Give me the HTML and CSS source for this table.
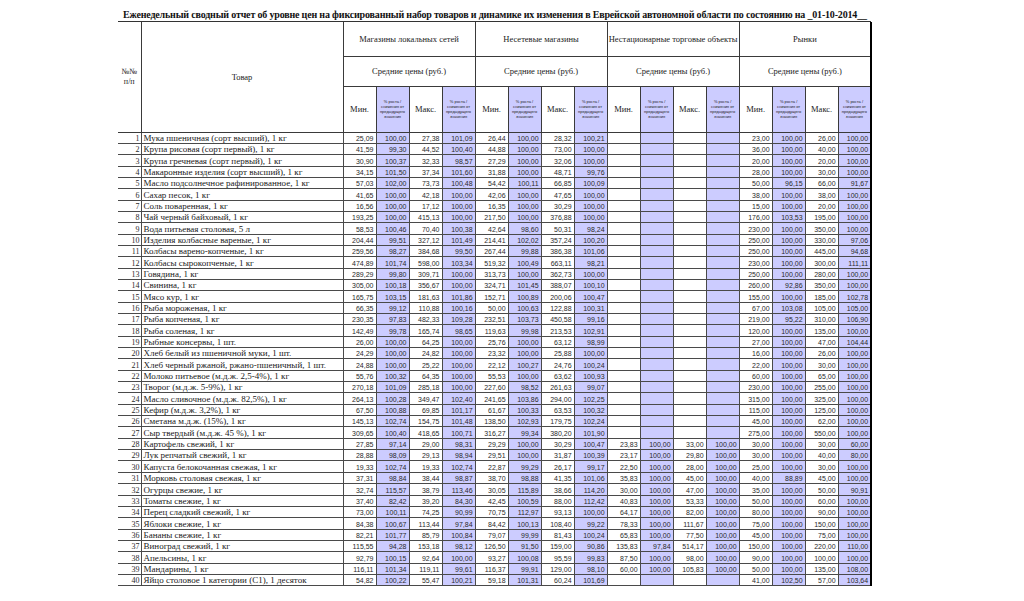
FILE: index.html
```html
<!DOCTYPE html>
<html lang="ru">
<head>
<meta charset="utf-8">
<title>Еженедельный сводный отчет</title>
<link rel="stylesheet" href="styles.css">
</head>
<body>
<div class="page">
<div class="title">Еженедельный сводный отчет об уровне цен на фиксированный набор товаров и динамике их изменения в Еврейской автономной области по состоянию на _01-10-2014__</div>
<table class="grid">
<colgroup>
<col class="c-i"><col class="c-t">
<col class="v"><col class="p"><col class="v"><col class="p">
<col class="v"><col class="p"><col class="v"><col class="p">
<col class="v"><col class="p"><col class="v"><col class="p">
<col class="v"><col class="p"><col class="v"><col class="p">
</colgroup>
<thead>
<tr class="h1">
<th class="hi" rowspan="3">№№<br>п/п</th>
<th class="ht" rowspan="3">Товар</th>
<th class="hg" colspan="4">Магазины локальных сетей</th>
<th class="hg" colspan="4">Несетевые магазины</th>
<th class="hg" colspan="4">Нестационарные торговые объекты</th>
<th class="hg last" colspan="4">Рынки</th>
</tr>
<tr class="h2">
<th class="hg" colspan="4">Средние цены (руб.)</th>
<th class="hg" colspan="4">Средние цены (руб.)</th>
<th class="hg" colspan="4">Средние цены (руб.)</th>
<th class="hg last" colspan="4">Средние цены (руб.)</th>
</tr>
<tr class="h3">
<th>Мин.</th><th class="hp">% роста / снижения от предыдущего значения</th><th>Макс.</th><th class="hp">% роста / снижения от предыдущего значения</th>
<th>Мин.</th><th class="hp">% роста / снижения от предыдущего значения</th><th>Макс.</th><th class="hp">% роста / снижения от предыдущего значения</th>
<th>Мин.</th><th class="hp">% роста / снижения от предыдущего значения</th><th>Макс.</th><th class="hp">% роста / снижения от предыдущего значения</th>
<th>Мин.</th><th class="hp">% роста / снижения от предыдущего значения</th><th>Макс.</th><th class="hp last">% роста / снижения от предыдущего значения</th>
</tr>
</thead>
<tbody>
<tr><td class="i">1</td><td class="t">Мука пшеничная (сорт высший), 1 кг</td><td>25,09</td><td>100,00</td><td>27,38</td><td>101,09</td><td>26,44</td><td>100,00</td><td>28,32</td><td>100,21</td><td></td><td></td><td></td><td></td><td>23,00</td><td>100,00</td><td>26,00</td><td>100,00</td></tr>
<tr><td class="i">2</td><td class="t">Крупа рисовая (сорт первый), 1 кг</td><td>41,59</td><td>99,30</td><td>44,52</td><td>100,40</td><td>44,88</td><td>100,00</td><td>73,00</td><td>100,00</td><td></td><td></td><td></td><td></td><td>36,00</td><td>100,00</td><td>40,00</td><td>100,00</td></tr>
<tr><td class="i">3</td><td class="t">Крупа гречневая (сорт первый), 1 кг</td><td>30,90</td><td>100,37</td><td>32,33</td><td>98,57</td><td>27,29</td><td>100,00</td><td>32,06</td><td>100,00</td><td></td><td></td><td></td><td></td><td>20,00</td><td>100,00</td><td>20,00</td><td>100,00</td></tr>
<tr><td class="i">4</td><td class="t">Макаронные изделия (сорт высший), 1 кг</td><td>34,15</td><td>101,50</td><td>37,34</td><td>101,60</td><td>31,88</td><td>100,00</td><td>48,71</td><td>99,76</td><td></td><td></td><td></td><td></td><td>28,00</td><td>100,00</td><td>30,00</td><td>100,00</td></tr>
<tr><td class="i">5</td><td class="t">Масло подсолнечное рафинированное, 1 кг</td><td>57,03</td><td>102,00</td><td>73,73</td><td>100,48</td><td>54,42</td><td>100,11</td><td>66,85</td><td>100,09</td><td></td><td></td><td></td><td></td><td>50,00</td><td>96,15</td><td>66,00</td><td>91,67</td></tr>
<tr><td class="i">6</td><td class="t">Сахар песок, 1 кг</td><td>41,65</td><td>100,00</td><td>42,18</td><td>100,00</td><td>42,06</td><td>100,00</td><td>47,65</td><td>100,00</td><td></td><td></td><td></td><td></td><td>38,00</td><td>100,00</td><td>38,00</td><td>100,00</td></tr>
<tr><td class="i">7</td><td class="t">Соль поваренная, 1 кг</td><td>16,56</td><td>100,00</td><td>17,12</td><td>100,00</td><td>16,35</td><td>100,00</td><td>30,29</td><td>100,00</td><td></td><td></td><td></td><td></td><td>15,00</td><td>100,00</td><td>20,00</td><td>100,00</td></tr>
<tr><td class="i">8</td><td class="t">Чай черный байховый, 1 кг</td><td>193,25</td><td>100,00</td><td>415,13</td><td>100,00</td><td>217,50</td><td>100,00</td><td>376,88</td><td>100,00</td><td></td><td></td><td></td><td></td><td>176,00</td><td>103,53</td><td>195,00</td><td>100,00</td></tr>
<tr><td class="i">9</td><td class="t">Вода питьевая столовая, 5 л</td><td>58,53</td><td>100,46</td><td>70,40</td><td>100,38</td><td>42,64</td><td>98,60</td><td>50,31</td><td>98,24</td><td></td><td></td><td></td><td></td><td>230,00</td><td>100,00</td><td>350,00</td><td>100,00</td></tr>
<tr><td class="i">10</td><td class="t">Изделия колбасные вареные, 1 кг</td><td>204,44</td><td>99,51</td><td>327,12</td><td>101,49</td><td>214,41</td><td>102,02</td><td>357,24</td><td>100,20</td><td></td><td></td><td></td><td></td><td>250,00</td><td>100,00</td><td>330,00</td><td>97,06</td></tr>
<tr><td class="i">11</td><td class="t">Колбасы варено-копченые, 1 кг</td><td>259,56</td><td>98,27</td><td>384,68</td><td>99,50</td><td>267,44</td><td>99,88</td><td>386,38</td><td>101,06</td><td></td><td></td><td></td><td></td><td>250,00</td><td>100,00</td><td>445,00</td><td>94,68</td></tr>
<tr><td class="i">12</td><td class="t">Колбасы сырокопченые, 1 кг</td><td>474,89</td><td>101,74</td><td>598,00</td><td>103,34</td><td>519,32</td><td>100,49</td><td>663,11</td><td>98,21</td><td></td><td></td><td></td><td></td><td>230,00</td><td>100,00</td><td>300,00</td><td>111,11</td></tr>
<tr><td class="i">13</td><td class="t">Говядина, 1 кг</td><td>289,29</td><td>99,80</td><td>309,71</td><td>100,00</td><td>313,73</td><td>100,00</td><td>362,73</td><td>100,00</td><td></td><td></td><td></td><td></td><td>250,00</td><td>100,00</td><td>280,00</td><td>100,00</td></tr>
<tr><td class="i">14</td><td class="t">Свинина, 1 кг</td><td>305,00</td><td>100,18</td><td>356,67</td><td>100,00</td><td>324,71</td><td>101,45</td><td>388,07</td><td>100,10</td><td></td><td></td><td></td><td></td><td>260,00</td><td>92,86</td><td>350,00</td><td>100,00</td></tr>
<tr><td class="i">15</td><td class="t">Мясо кур, 1 кг</td><td>165,75</td><td>103,15</td><td>181,63</td><td>101,86</td><td>152,71</td><td>100,89</td><td>200,06</td><td>100,47</td><td></td><td></td><td></td><td></td><td>155,00</td><td>100,00</td><td>185,00</td><td>102,78</td></tr>
<tr><td class="i">16</td><td class="t">Рыба мороженая, 1 кг</td><td>66,35</td><td>99,12</td><td>110,88</td><td>100,16</td><td>50,00</td><td>100,63</td><td>122,88</td><td>100,31</td><td></td><td></td><td></td><td></td><td>67,00</td><td>103,08</td><td>105,00</td><td>105,00</td></tr>
<tr><td class="i">17</td><td class="t">Рыба копченая, 1 кг</td><td>230,35</td><td>97,83</td><td>482,33</td><td>109,28</td><td>232,51</td><td>103,73</td><td>450,58</td><td>99,16</td><td></td><td></td><td></td><td></td><td>219,00</td><td>95,22</td><td>310,00</td><td>106,90</td></tr>
<tr><td class="i">18</td><td class="t">Рыба соленая, 1 кг</td><td>142,49</td><td>99,78</td><td>165,74</td><td>98,65</td><td>119,63</td><td>99,98</td><td>213,53</td><td>102,91</td><td></td><td></td><td></td><td></td><td>120,00</td><td>100,00</td><td>135,00</td><td>100,00</td></tr>
<tr><td class="i">19</td><td class="t">Рыбные консервы, 1 шт.</td><td>26,00</td><td>100,00</td><td>64,25</td><td>100,00</td><td>25,76</td><td>100,00</td><td>63,12</td><td>98,99</td><td></td><td></td><td></td><td></td><td>27,00</td><td>100,00</td><td>47,00</td><td>104,44</td></tr>
<tr><td class="i">20</td><td class="t">Хлеб белый из пшеничной муки, 1 шт.</td><td>24,29</td><td>100,00</td><td>24,82</td><td>100,00</td><td>23,32</td><td>100,00</td><td>25,88</td><td>100,00</td><td></td><td></td><td></td><td></td><td>16,00</td><td>100,00</td><td>26,00</td><td>100,00</td></tr>
<tr><td class="i">21</td><td class="t">Хлеб черный ржаной, ржано-пшеничный, 1 шт.</td><td>24,88</td><td>100,00</td><td>25,22</td><td>100,00</td><td>22,12</td><td>100,27</td><td>24,76</td><td>100,24</td><td></td><td></td><td></td><td></td><td>22,00</td><td>100,00</td><td>30,00</td><td>100,00</td></tr>
<tr><td class="i">22</td><td class="t">Молоко питьевое (м.д.ж. 2,5-4%), 1 кг</td><td>55,76</td><td>100,32</td><td>64,35</td><td>100,00</td><td>55,53</td><td>100,00</td><td>63,62</td><td>100,93</td><td></td><td></td><td></td><td></td><td>60,00</td><td>100,00</td><td>65,00</td><td>100,00</td></tr>
<tr><td class="i">23</td><td class="t">Творог (м.д.ж. 5-9%), 1 кг</td><td>270,18</td><td>101,09</td><td>285,18</td><td>100,00</td><td>227,60</td><td>98,52</td><td>261,63</td><td>99,07</td><td></td><td></td><td></td><td></td><td>230,00</td><td>100,00</td><td>255,00</td><td>100,00</td></tr>
<tr><td class="i">24</td><td class="t">Масло сливочное (м.д.ж. 82,5%), 1 кг</td><td>264,13</td><td>100,28</td><td>349,47</td><td>102,40</td><td>241,65</td><td>103,86</td><td>294,00</td><td>102,25</td><td></td><td></td><td></td><td></td><td>315,00</td><td>100,00</td><td>325,00</td><td>100,00</td></tr>
<tr><td class="i">25</td><td class="t">Кефир (м.д.ж. 3,2%), 1 кг</td><td>67,50</td><td>100,88</td><td>69,85</td><td>101,17</td><td>61,67</td><td>100,33</td><td>63,53</td><td>100,32</td><td></td><td></td><td></td><td></td><td>115,00</td><td>100,00</td><td>125,00</td><td>100,00</td></tr>
<tr><td class="i">26</td><td class="t">Сметана м.д.ж. (15%), 1 кг</td><td>145,13</td><td>102,74</td><td>154,75</td><td>101,48</td><td>138,50</td><td>102,93</td><td>179,75</td><td>102,24</td><td></td><td></td><td></td><td></td><td>45,00</td><td>100,00</td><td>62,00</td><td>100,00</td></tr>
<tr><td class="i">27</td><td class="t">Сыр твердый (м.д.ж. 45 %), 1 кг</td><td>309,65</td><td>100,40</td><td>418,65</td><td>100,71</td><td>316,27</td><td>99,34</td><td>380,20</td><td>101,90</td><td></td><td></td><td></td><td></td><td>275,00</td><td>100,00</td><td>550,00</td><td>100,00</td></tr>
<tr><td class="i">28</td><td class="t">Картофель свежий, 1 кг</td><td>27,85</td><td>97,14</td><td>29,00</td><td>98,31</td><td>29,29</td><td>100,00</td><td>30,29</td><td>100,47</td><td>23,83</td><td>100,00</td><td>33,00</td><td>100,00</td><td>30,00</td><td>100,00</td><td>30,00</td><td>60,00</td></tr>
<tr><td class="i">29</td><td class="t">Лук репчатый свежий, 1 кг</td><td>28,88</td><td>98,09</td><td>29,13</td><td>98,94</td><td>29,51</td><td>100,00</td><td>31,87</td><td>100,39</td><td>23,17</td><td>100,00</td><td>29,80</td><td>100,00</td><td>30,00</td><td>100,00</td><td>40,00</td><td>80,00</td></tr>
<tr><td class="i">30</td><td class="t">Капуста белокочанная свежая, 1 кг</td><td>19,33</td><td>102,74</td><td>19,33</td><td>102,74</td><td>22,87</td><td>99,29</td><td>26,17</td><td>99,17</td><td>22,50</td><td>100,00</td><td>28,00</td><td>100,00</td><td>25,00</td><td>100,00</td><td>30,00</td><td>100,00</td></tr>
<tr><td class="i">31</td><td class="t">Морковь столовая свежая, 1 кг</td><td>37,31</td><td>98,84</td><td>38,44</td><td>98,87</td><td>38,70</td><td>98,88</td><td>41,35</td><td>101,06</td><td>35,83</td><td>100,00</td><td>45,00</td><td>100,00</td><td>40,00</td><td>88,89</td><td>45,00</td><td>100,00</td></tr>
<tr><td class="i">32</td><td class="t">Огурцы свежие, 1 кг</td><td>32,74</td><td>115,57</td><td>38,79</td><td>113,46</td><td>30,05</td><td>115,89</td><td>38,66</td><td>114,20</td><td>30,00</td><td>100,00</td><td>47,00</td><td>100,00</td><td>35,00</td><td>100,00</td><td>50,00</td><td>90,91</td></tr>
<tr><td class="i">33</td><td class="t">Томаты свежие, 1 кг</td><td>37,40</td><td>82,42</td><td>39,20</td><td>84,30</td><td>42,45</td><td>100,59</td><td>88,00</td><td>112,42</td><td>40,83</td><td>100,00</td><td>53,33</td><td>100,00</td><td>50,00</td><td>100,00</td><td>60,00</td><td>100,00</td></tr>
<tr><td class="i">34</td><td class="t">Перец сладкий свежий, 1 кг</td><td>73,00</td><td>100,11</td><td>74,25</td><td>90,99</td><td>70,75</td><td>112,97</td><td>93,13</td><td>100,00</td><td>64,17</td><td>100,00</td><td>82,00</td><td>100,00</td><td>80,00</td><td>100,00</td><td>90,00</td><td>100,00</td></tr>
<tr><td class="i">35</td><td class="t">Яблоки свежие, 1 кг</td><td>84,38</td><td>100,67</td><td>113,44</td><td>97,84</td><td>84,42</td><td>100,13</td><td>108,40</td><td>99,22</td><td>78,33</td><td>100,00</td><td>111,67</td><td>100,00</td><td>75,00</td><td>100,00</td><td>150,00</td><td>100,00</td></tr>
<tr><td class="i">36</td><td class="t">Бананы свежие, 1 кг</td><td>82,21</td><td>101,77</td><td>85,79</td><td>100,84</td><td>79,07</td><td>99,99</td><td>81,43</td><td>100,24</td><td>65,83</td><td>100,00</td><td>77,50</td><td>100,00</td><td>45,00</td><td>100,00</td><td>75,00</td><td>100,00</td></tr>
<tr><td class="i">37</td><td class="t">Виноград свежий, 1 кг</td><td>115,55</td><td>94,28</td><td>153,18</td><td>98,12</td><td>126,50</td><td>91,50</td><td>159,00</td><td>90,86</td><td>135,83</td><td>97,84</td><td>514,17</td><td>100,00</td><td>150,00</td><td>100,00</td><td>220,00</td><td>110,00</td></tr>
<tr><td class="i">38</td><td class="t">Апельсины, 1 кг</td><td>92,79</td><td>100,15</td><td>92,64</td><td>100,00</td><td>93,27</td><td>100,08</td><td>95,59</td><td>99,83</td><td>87,50</td><td>100,00</td><td>98,00</td><td>100,00</td><td>90,00</td><td>100,00</td><td>100,00</td><td>100,00</td></tr>
<tr><td class="i">39</td><td class="t">Мандарины, 1 кг</td><td>116,11</td><td>101,34</td><td>119,11</td><td>99,61</td><td>116,37</td><td>99,91</td><td>129,00</td><td>98,10</td><td>60,00</td><td>100,00</td><td>105,83</td><td>100,00</td><td>50,00</td><td>100,00</td><td>135,00</td><td>108,00</td></tr>
<tr><td class="i">40</td><td class="t">Яйцо столовое 1 категории (С1), 1 десяток</td><td>54,82</td><td>100,22</td><td>55,47</td><td>100,21</td><td>59,18</td><td>101,31</td><td>60,24</td><td>101,69</td><td></td><td></td><td></td><td></td><td>41,00</td><td>102,50</td><td>57,00</td><td>103,64</td></tr>
</tbody>
</table>
</div>
</body>
</html>
```

FILE: styles.css
```css
html, body {
  margin: 0;
  padding: 0;
  background: #ffffff;
}

.page {
  padding: 9px 0 0 118px;
}

.title {
  width: 753px;
  box-sizing: border-box;
  height: 13px;
  padding-left: 5px;
  border-bottom: 1px solid #333333;
  font-family: "Liberation Serif", serif;
  font-weight: bold;
  font-size: 10px;
  letter-spacing: -0.175px;
  line-height: 12px;
  color: #111111;
  white-space: nowrap;
}

.grid {
  border-collapse: collapse;
  table-layout: fixed;
  width: 753px;
}

.c-i { width: 23px; }
.c-t { width: 202px; }
.v { width: 33px; }
.p { width: 33px; background: #ccccff; }

.grid th,
.grid td {
  border: 1px solid #3a3a3a;
  padding: 0;
  overflow: hidden;
  white-space: nowrap;
}

.grid th {
  font-family: "Liberation Serif", serif;
  font-weight: normal;
  font-size: 8.5px;
  color: #222222;
  text-align: center;
  vertical-align: middle;
}

.grid th.hg {
  background: #ffffff;
}

.grid th.hi {
  border-left: none;
  border-top: none;
  line-height: 10px;
  font-size: 8px;
}

.grid th.ht {
  border-top: none;
}

.h1 th { border-top: none; }

.grid th.hp {
  font-family: "Liberation Sans", sans-serif;
  font-size: 4px;
  line-height: 5px;
  white-space: normal;
  padding: 0 1px;
}

.h1 { height: 34px; }
.h2 { height: 30px; }
.h3 { height: 46px; }

.grid tbody tr { height: 11.35px; }

.grid td {
  font-family: "Liberation Sans", sans-serif;
  font-size: 7px;
  line-height: 8px;
  color: #2a2a2a;
  text-align: right;
  vertical-align: bottom;
  padding-right: 2px;
  border-color: #4a4a4a;
}

.grid td.i {
  border-left: none;
  font-family: "Liberation Serif", serif;
  font-size: 8px;
  padding-right: 1px;
}

.grid td.t {
  font-family: "Liberation Serif", serif;
  font-size: 9px;
  line-height: 10px;
  text-align: left;
  padding-left: 2px;
  padding-right: 0;
  color: #1a1a1a;
}

.grid tr > :last-child,
.grid th.last {
  border-right: 2px solid #000000;
}
```
